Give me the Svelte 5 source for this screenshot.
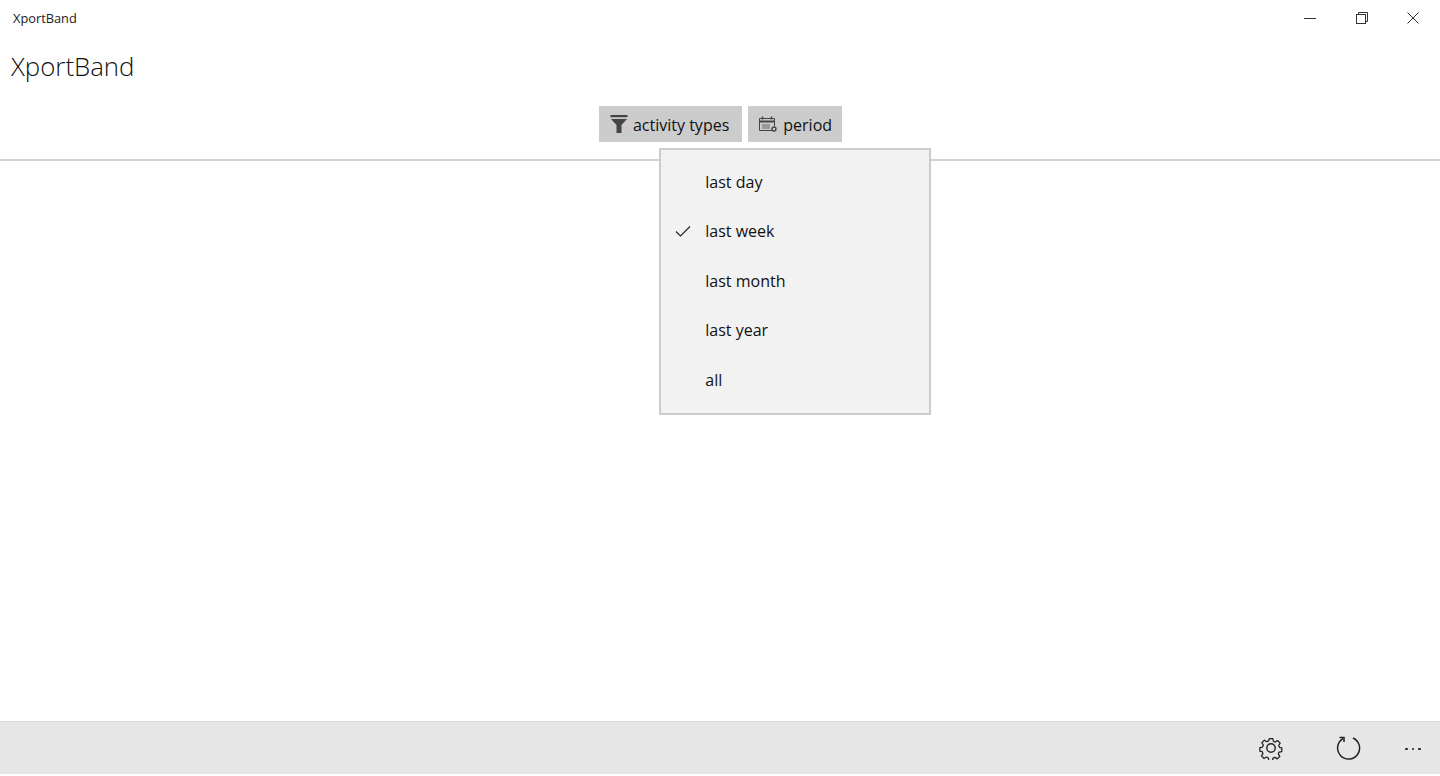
<script>
	const periods = ['last day', 'last week', 'last month', 'last year', 'all'];
	let selected = $state('last week');
</script>

<div class="window">
	<header class="titlebar">
		<span class="app-name">XportBand</span>
		<div class="caption">
			<button aria-label="Minimize">
				<svg width="12" height="12" viewBox="0 0 12 12"><path d="M0 6.5h12" stroke="#333" fill="none" /></svg>
			</button>
			<button aria-label="Restore">
				<svg width="12" height="12" viewBox="0 0 12 12" fill="none" stroke="#333">
					<rect x="0.5" y="2.5" width="9" height="9" />
					<path d="M2.5 2.5v-2h9v9h-2" />
				</svg>
			</button>
			<button aria-label="Close" class="close">
				<svg width="12" height="12" viewBox="0 0 12 12"><path d="M0.5 0.5l11 11M11.5 0.5l-11 11" stroke="#333" fill="none" /></svg>
			</button>
		</div>
	</header>

	<h1 class="title">XportBand</h1>

	<div class="toolbar">
		<button class="tool tool-types">
			<svg width="18" height="20" viewBox="0 0 18 20">
				<path d="M0.5 1h17v2.2H0.5z" fill="#444" />
				<path d="M1 5h16l-5.5 6v8h-5v-8z" fill="#444" />
			</svg>
			<span class="label">activity types</span>
		</button>
		<div class="period-wrap">
			<button class="tool tool-period">
				<svg width="18" height="16" viewBox="0 0 18 16" fill="none" stroke="#444">
					<path d="M13 14.5H0.5v-12h15v7.5" />
					<path d="M1 5.5h14" stroke-width="2" />
					<path d="M3.5 0.5v3M12.5 0.5v3" stroke-width="1.5" />
					<rect x="3" y="8" width="8" height="5" fill="#999" stroke="none" />
					<circle cx="15" cy="13" r="2" stroke-width="1.4" />
				</svg>
				<span class="label">period</span>
			</button>
			<ul class="menu">
				{#each periods as p}
					<li>
						<span class="check">
							{#if p === selected}
								<svg width="16" height="12" viewBox="0 0 16 12"><path d="M1 6.5l4.5 4.5L15 1.5" stroke="#222" stroke-width="1.1" fill="none" /></svg>
							{/if}
						</span>
						{p}
					</li>
				{/each}
			</ul>
		</div>
	</div>

	<main class="content"></main>

	<footer class="appbar">
		<button aria-label="Settings">
			<svg width="24" height="24" viewBox="0 0 24 24" fill="none" stroke="#222" stroke-width="1.4" stroke-linejoin="round">
				<path d="M10 1.5h4l.6 3 2.1.9 2.6-1.7 2.9 2.9-1.7 2.6.9 2.1 2.6.6v4l-3 .6-.9 2.1 1.7 2.6-2.9 2.9-2.6-1.7-2.1.9-.6 2.6h-4l-.6-3-2.1-.9-2.6 1.7-2.9-2.9 1.7-2.6-.9-2.1-2.6-.6v-4l3-.6.9-2.1-1.7-2.6 2.9-2.9 2.6 1.7 2.1-.9z" transform="translate(1.2 1.2) scale(.9)" />
				<circle cx="12" cy="12" r="4.2" />
			</svg>
		</button>
		<button aria-label="Refresh" class="refresh">
			<svg width="26" height="26" viewBox="0 0 26 26" fill="none" stroke="#222" stroke-width="1.5">
				<path d="M8 3.6A11 11 0 1 0 18 3" />
				<path d="M4.5 2.5h4.5v4.5" />
			</svg>
		</button>
		<button aria-label="More" class="more">
			<i></i><i></i><i></i>
		</button>
	</footer>
</div>

<style>
	:global(body) {
		background: #fff;
		font-family: "Open Sans", "Noto Sans", sans-serif;
		color: #111;
	}
	button {
		background: none;
		border: none;
		padding: 0;
		font: inherit;
		color: inherit;
	}
	.window {
		display: flex;
		flex-direction: column;
		height: 776px;
		overflow: hidden;
	}
	.titlebar {
		display: flex;
		justify-content: space-between;
		align-items: center;
		height: 36px;
		flex: none;
	}
	.app-name {
		margin-left: 13px;
		font-size: 12.8px;
		color: #222;
	}
	.caption {
		display: flex;
		margin-right: 2px;
	}
	.caption button {
		display: flex;
		align-items: center;
		justify-content: center;
		width: 52px;
		height: 36px;
	}
	.caption .close {
		width: 50px;
	}
	.title {
		margin: 12px 0 0;
		padding-left: 11px;
		font-size: 25.8px;
		font-weight: 300;
		line-height: 36px;
		height: 36px;
		flex: none;
	}
	.toolbar {
		display: flex;
		justify-content: center;
		gap: 6px;
		margin-top: 22px;
		padding-left: 1px;
		height: 53px;
		flex: none;
		border-bottom: 2px solid #d2d2d2;
	}
	.tool {
		display: flex;
		align-items: center;
		gap: 5px;
		height: 36px;
		padding: 0 11px;
		background: #ccc;
		font-size: 16px;
		white-space: nowrap;
	}
	.label {
		padding-top: 2px;
	}
	.tool-types {
		padding-right: 13px;
	}
	.tool-period {
		gap: 6px;
		padding-right: 10px;
	}
	.period-wrap {
		position: relative;
	}
	.menu {
		position: absolute;
		top: 42px;
		left: -89px;
		z-index: 2;
		width: 268px;
		margin: 0;
		padding: 7px 0 8px;
		list-style: none;
		background: #f2f2f2;
		border: 2px solid #ccc;
		font-size: 16px;
	}
	.menu li {
		display: flex;
		align-items: center;
		height: 49.5px;
	}
	.check {
		display: flex;
		align-items: center;
		justify-content: flex-start;
		width: 44px;
		padding-left: 14px;
		box-sizing: border-box;
	}
	.content {
		flex: 1;
	}
	.appbar {
		display: flex;
		justify-content: flex-end;
		align-items: center;
		height: 52px;
		margin-bottom: 2px;
		flex: none;
		background: #e6e6e6;
		border-top: 1px solid #dcdcdc;
	}
	.appbar button {
		display: flex;
		align-items: center;
		justify-content: center;
		width: 76px;
		height: 52px;
	}
	.appbar .refresh {
		width: 77px;
	}
	.appbar .more {
		gap: 4px;
		width: 54px;
		padding-top: 2px;
	}
	.more i {
		width: 2.5px;
		height: 2.5px;
		background: #222;
		border-radius: 50%;
	}
</style>
